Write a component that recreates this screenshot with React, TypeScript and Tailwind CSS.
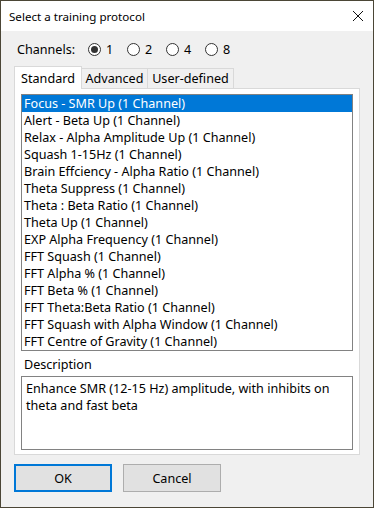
import { useState } from "react";

const protocols = [
  "Focus - SMR Up (1 Channel)",
  "Alert - Beta Up (1 Channel)",
  "Relax - Alpha Amplitude Up (1 Channel)",
  "Squash 1-15Hz (1 Channel)",
  "Brain Effciency - Alpha Ratio (1 Channel)",
  "Theta Suppress (1 Channel)",
  "Theta : Beta Ratio (1 Channel)",
  "Theta Up (1 Channel)",
  "EXP Alpha Frequency (1 Channel)",
  "FFT Squash (1 Channel)",
  "FFT Alpha % (1 Channel)",
  "FFT Beta % (1 Channel)",
  "FFT Theta:Beta Ratio (1 Channel)",
  "FFT Squash with Alpha Window (1 Channel)",
  "FFT Centre of Gravity (1 Channel)",
];

function Radio({ label, checked, onClick }: { label: string; checked: boolean; onClick: () => void }) {
  return (
    <button onClick={onClick} className="flex items-center gap-[5px] w-[39px]">
      <span className="w-[13px] h-[13px] rounded-full border border-[#333] bg-white flex items-center justify-center">
        {checked && <span className="w-[7px] h-[7px] rounded-full bg-[#333]" />}
      </span>
      <span>{label}</span>
    </button>
  );
}

export default function App() {
  const [channels, setChannels] = useState("1");
  const [selected, setSelected] = useState(0);

  return (
    <div
      className="w-[374px] h-[508px] border border-[#4b4636] bg-[#f0f0f0] flex flex-col text-[12.6px] text-black leading-[17px]"
      style={{ fontFamily: '"Segoe UI", "Noto Sans", sans-serif' }}
    >
      <div className="h-[30px] bg-white flex items-center justify-between pl-[8px] pr-[9px] shrink-0 text-[11.6px]">
        <span>Select a training protocol</span>
        <svg width="12" height="12" viewBox="0 0 12 12">
          <path d="M1 1 L11 11 M11 1 L1 11" stroke="#111" strokeWidth="1" />
        </svg>
      </div>

      <div className="flex items-center h-[24px] mt-[6px] pl-[16px]">
        <span className="w-[71px]">Channels:</span>
        {["1", "2", "4", "8"].map((c) => (
          <Radio key={c} label={c} checked={channels === c} onClick={() => setChannels(c)} />
        ))}
      </div>

      <div className="flex items-end h-[23px] mt-[4px] ml-[13px]">
        <div className="h-[23px] w-[68px] bg-white border border-b-0 border-[#d9d9d9] flex items-center justify-center relative top-[1px] z-10">
          Standard
        </div>
        <div className="h-[20px] w-[66px] border border-l-0 border-b-0 border-[#d9d9d9] flex items-center justify-center">Advanced</div>
        <div className="h-[20px] w-[86px] border border-l-0 border-b-0 border-[#d9d9d9] flex items-center justify-center">User-defined</div>
      </div>

      <div className="mx-[13px] h-[367px] bg-white border border-[#d9d9d9] px-[6px] pt-[5px] flex flex-col">
        <div className="border border-[#828282] h-[257px] overflow-hidden">
          {protocols.map((p, i) => (
            <div
              key={p}
              onClick={() => setSelected(i)}
              className={`h-[17px] pl-[2px] whitespace-nowrap ${i === selected ? "bg-[#0078d7] text-white" : ""}`}
            >
              {p}
            </div>
          ))}
        </div>
        <div className="mt-[5px] pl-[3px] h-[18px]">Description</div>
        <div className="mt-[2px] border border-[#828282] h-[74px] px-[4px] pt-[3px]">
          Enhance SMR (12-15 Hz) amplitude, with inhibits on theta and fast beta
        </div>
      </div>

      <div className="flex gap-[11px] ml-[13px] mt-[9px]">
        <button className="w-[98px] h-[28px] border-2 border-[#0078d7] bg-[#e1e1e1]">OK</button>
        <button className="w-[98px] h-[28px] border border-[#adadad] bg-[#e1e1e1]">Cancel</button>
      </div>
    </div>
  );
}
